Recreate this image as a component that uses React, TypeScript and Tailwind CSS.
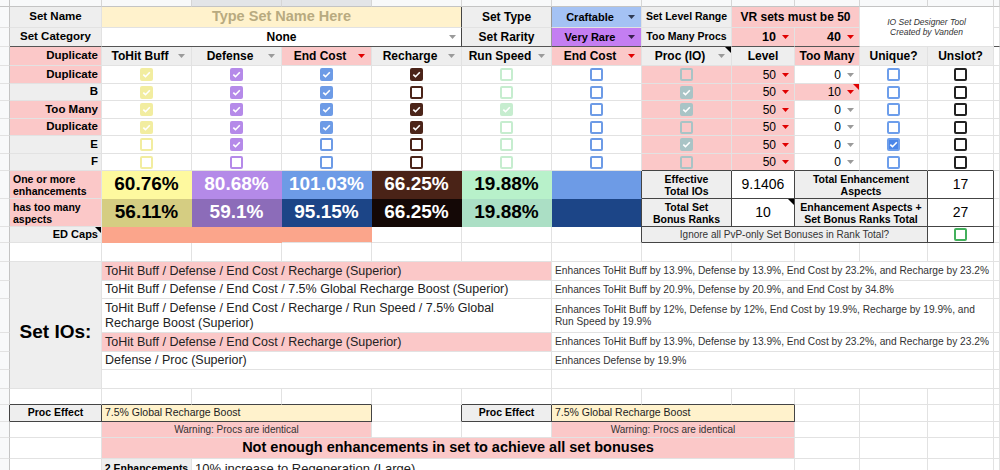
import React from 'react';

type CellProps = { className?: string; bd?: string; children?: React.ReactNode };

const Cell = ({ className = '', bd = 'border-[#e2e2e2]', children }: CellProps) => (
  <div className={`relative flex min-w-0 items-center overflow-hidden border-r border-b ${bd} ${className}`}>{children}</div>
);

const Rh = ({ bd = 'border-[#e2e2e2] border-r-[#c4c4c4]' }: { bd?: string }) => <Cell bd={bd} className="bg-[#f8f9fa]" />;

const Arrow = ({ c = '#8a8a8a', className = '' }: { c?: string; className?: string }) => (
  <svg width="7" height="4" viewBox="0 0 7 4" className={`shrink-0 ${className}`}>
    <path d="M0 0h7L3.5 4z" fill={c} />
  </svg>
);

const Corner = ({ c = '#000' }: { c?: string }) => (
  <svg width="6" height="6" viewBox="0 0 6 6" className="absolute right-0 top-0">
    <path d="M0 0h6v6z" fill={c} />
  </svg>
);

type Tone = { line: string; fill: string };
const T: Record<string, Tone> = {
  yellow: { line: 'border-[#f2eda0]', fill: 'bg-[#f2eda0]' },
  purple: { line: 'border-[#b58ae9]', fill: 'bg-[#b58ae9]' },
  blue: { line: 'border-[#6d9be6]', fill: 'bg-[#6d9be6]' },
  brown: { line: 'border-[#4b2419]', fill: 'bg-[#4b2419]' },
  green: { line: 'border-[#c6edcf]', fill: 'bg-[#c6edcf]' },
  proc: { line: 'border-[#a9c4c6]', fill: 'bg-[#a9c4c6]' },
  unique: { line: 'border-[#6d9eeb]', fill: 'bg-[#4a86e8]' },
  black: { line: 'border-[#222222]', fill: 'bg-[#222222]' },
  pvp: { line: 'border-[#43b05c]', fill: 'bg-[#43b05c]' },
};

const Check = ({ on, t }: { on: boolean; t: Tone }) => (
  <div className={`flex h-[13px] w-[13px] items-center justify-center rounded-[2px] border-2 ${t.line} ${on ? t.fill : ''}`}>
    {on && (
      <svg width="9" height="9" viewBox="0 0 9 9">
        <path d="M1.3 4.6 3.5 6.7 7.8 2.2" fill="none" stroke="#fff" strokeWidth="1.6" />
      </svg>
    )}
  </div>
);

const PINK = 'bg-[#fbc8c8]';
const GREY = 'bg-[#eeeeee]';

const rows = [
  { label: 'Duplicate', pink: true, hit: 1, def: 1, end: 1, rech: 1, run: 0, proc: 0, many: 0, uniq: 0 },
  { label: 'B', pink: false, hit: 1, def: 1, end: 1, rech: 0, run: 0, proc: 1, many: 10, uniq: 0 },
  { label: 'Too Many', pink: true, hit: 1, def: 1, end: 1, rech: 1, run: 1, proc: 1, many: 0, uniq: 0 },
  { label: 'Duplicate', pink: true, hit: 1, def: 1, end: 1, rech: 1, run: 0, proc: 0, many: 0, uniq: 0 },
  { label: 'E', pink: false, hit: 0, def: 1, end: 0, rech: 0, run: 0, proc: 1, many: 0, uniq: 1 },
  { label: 'F', pink: false, hit: 0, def: 0, end: 0, rech: 0, run: 0, proc: 0, many: 0, uniq: 0 },
];

const setIOs = [
  {
    pink: true,
    name: 'ToHit Buff / Defense / End Cost / Recharge (Superior)',
    desc: 'Enhances ToHit Buff by 13.9%, Defense by 13.9%, End Cost by 23.2%, and Recharge by 23.2%',
  },
  {
    pink: false,
    name: 'ToHit Buff / Defense / End Cost / 7.5% Global Recharge Boost (Superior)',
    desc: 'Enhances ToHit Buff by 20.9%, Defense by 20.9%, and End Cost by 34.8%',
  },
  {
    pink: false,
    name: (
      <>
        ToHit Buff / Defense / End Cost / Recharge / Run Speed / 7.5% Global
        <br />
        Recharge Boost (Superior)
      </>
    ),
    desc: (
      <>
        Enhances ToHit Buff by 12%, Defense by 12%, End Cost by 19.9%, Recharge by 19.9%, and
        <br />
        Run Speed by 19.9%
      </>
    ),
  },
  {
    pink: true,
    name: 'ToHit Buff / Defense / End Cost / Recharge (Superior)',
    desc: 'Enhances ToHit Buff by 13.9%, Defense by 13.9%, End Cost by 23.2%, and Recharge by 23.2%',
  },
  { pink: false, name: 'Defense / Proc (Superior)', desc: 'Enhances Defense by 19.9%' },
];

const Header = ({ text, tone, arrow }: { text: string; tone: string; arrow?: string }) => (
  <Cell className={`${tone} text-[12px] font-bold`}>
    <div className="flex-1 text-center">{text}</div>
    {arrow && <Arrow c={arrow} className="mr-[6px]" />}
  </Cell>
);

const Pct = ({ v, bg, light }: { v: string; bg: string; light?: boolean }) => (
  <Cell bd="border-transparent" className={`justify-center text-[19px] font-bold ${bg} ${light ? 'text-white' : 'text-black'}`}>
    {v}
  </Cell>
);

export default function App() {
  const dk = 'border-[#444444]';
  return (
    <div className="h-[470px] w-[1000px] overflow-hidden bg-white font-['Liberation_Sans',Arial,sans-serif] text-black">
      <div className="grid grid-cols-[10px_92px_90px_90px_90px_90px_90px_90px_90px_63px_65px_68px_66px_6px] grid-rows-[7px_21px_19px_19px_18px_17px_18px_17px_18px_17px_28px_28px_16px_19px_19px_18px_34px_19px_18px_19px_16px_17px_16px_21px_24px]">
        {/* sheet column header strip */}
        <Cell bd="border-[#c4c4c4]" className="bg-[#f8f9fa]" />
        <Cell bd="border-[#d6d6d6] border-b-[#c4c4c4]" className="bg-[#f8f9fa]" />
        <Cell bd="border-[#d6d6d6] border-b-[#c4c4c4]" className="bg-[#f8f9fa]" />
        <Cell bd="border-[#d6d6d6] border-b-[#c4c4c4]" className="bg-[#e3e5e8]" />
        <Cell bd="border-[#d6d6d6] border-b-[#c4c4c4]" className="bg-[#e3e5e8]" />
        <Cell bd="border-[#d6d6d6] border-b-[#c4c4c4]" className="bg-[#f8f9fa]" />
        <Cell bd="border-[#d6d6d6] border-b-[#c4c4c4]" className="bg-[#f8f9fa]" />
        <Cell bd="border-[#d6d6d6] border-b-[#c4c4c4]" className="bg-[#f8f9fa]" />
        <Cell bd="border-[#d6d6d6] border-b-[#c4c4c4]" className="bg-[#f8f9fa]" />
        <Cell bd="border-[#d6d6d6] border-b-[#c4c4c4]" className="bg-[#f8f9fa]" />
        <Cell bd="border-[#d6d6d6] border-b-[#c4c4c4]" className="bg-[#f8f9fa]" />
        <Cell bd="border-[#d6d6d6] border-b-[#c4c4c4]" className="bg-[#f8f9fa]" />
        <Cell bd="border-[#d6d6d6] border-b-[#c4c4c4]" className="bg-[#f8f9fa]" />
        <Cell bd="border-[#d6d6d6] border-b-[#c4c4c4]" className="bg-[#f8f9fa]" />

        {/* row 1 */}
        <Rh />
        <Cell className={`${GREY} justify-center text-[11.5px] font-bold`}>Set Name</Cell>
        <Cell bd="border-[#e2e2e2] border-r-[#444444]" className="col-span-4 justify-center bg-[#fff2cc] text-[14.5px] font-bold text-[#b8aa80]">
          Type Set Name Here
        </Cell>
        <Cell bd="border-[#e2e2e2] border-r-[#999999]" className={`${GREY} justify-center text-[12px] font-bold`}>Set Type</Cell>
        <Cell className="bg-[#a4c2f4] text-[11px] font-bold">
          <div className="flex-1 text-center">Craftable</div>
          <Arrow c="#2f3b55" className="mr-[6px]" />
        </Cell>
        <Cell className={`${GREY} justify-center text-[10.5px] font-bold`}>Set Level Range</Cell>
        <Cell className={`${PINK} col-span-2 justify-center text-[12px] font-bold`}>VR sets must be 50</Cell>
        <Cell className="col-span-2 row-span-2 flex-col justify-center text-[8.5px] italic leading-[10px] text-[#333]">
          <div>IO Set Designer Tool</div>
          <div>Created by Vanden</div>
        </Cell>
        <Cell />

        {/* row 2 */}
        <Rh />
        <Cell bd="border-[#e2e2e2] border-b-[#555555]" className={`${GREY} justify-center text-[11.5px] font-bold`}>Set Category</Cell>
        <Cell bd="border-[#444444] border-b-[#555555]" className="col-span-4 text-[12px] font-bold">
          <div className="flex-1 pl-[12px] text-center">None</div>
          <Arrow c="#9a9a9a" className="mr-[5px]" />
        </Cell>
        <Cell bd="border-[#999999] border-b-[#555555]" className={`${GREY} justify-center text-[12px] font-bold`}>Set Rarity</Cell>
        <Cell bd="border-[#e2e2e2] border-b-[#555555]" className="bg-[#c47ef2] text-[11px] font-bold">
          <div className="flex-1 text-center">Very Rare</div>
          <Arrow c="#3a2050" className="mr-[6px]" />
        </Cell>
        <Cell bd="border-[#e2e2e2] border-b-[#555555]" className={`${GREY} justify-center text-[10.5px] font-bold`}>Too Many Procs</Cell>
        <Cell bd="border-[#e2e2e2] border-b-[#555555]" className={`${PINK} justify-end text-[12.5px] font-bold`}>
          10
          <Arrow c="#e00000" className="ml-[6px] mr-[5px]" />
        </Cell>
        <Cell bd="border-[#e2e2e2] border-b-[#555555]" className={`${PINK} justify-end text-[12.5px] font-bold`}>
          40
          <Arrow c="#e00000" className="ml-[6px] mr-[5px]" />
        </Cell>
        <Cell bd="border-[#e2e2e2] border-b-[#555555]" />

        {/* row 3 headers */}
        <Rh />
        <Cell className={`${PINK} justify-end pr-[3px] text-[11.5px] font-bold`}>Duplicate</Cell>
        <Header text="ToHit Buff" tone={GREY} arrow="#9a9a9a" />
        <Header text="Defense" tone={GREY} arrow="#9a9a9a" />
        <Header text="End Cost" tone={PINK} arrow="#e00000" />
        <Header text="Recharge" tone={GREY} arrow="#9a9a9a" />
        <Header text="Run Speed" tone={GREY} arrow="#9a9a9a" />
        <Header text="End Cost" tone={PINK} arrow="#e00000" />
        <Cell className={`${GREY} text-[12px] font-bold`}>
          <div className="flex-1 text-center">Proc (IO)</div>
          <Arrow c="#9a9a9a" className="mr-[6px]" />
          <Corner />
        </Cell>
        <Header text="Level" tone={GREY} />
        <Header text="Too Many" tone={PINK} />
        <Header text="Unique?" tone={GREY} />
        <Header text="Unslot?" tone={GREY} />
        <Cell />

        {/* checkbox rows */}
        {rows.map((r, i) => {
          const last = i === rows.length - 1;
          const bot = last ? 'border-[#e2e2e2] border-b-[#444444]' : 'border-[#e2e2e2]';
          return (
            <React.Fragment key={i}>
              <Rh />
              <Cell className={`${r.pink ? PINK : GREY} justify-end pr-[3px] text-[11.5px] font-bold`}>{r.label}</Cell>
              <Cell className="justify-center"><Check on={!!r.hit} t={T.yellow} /></Cell>
              <Cell className="justify-center"><Check on={!!r.def} t={T.purple} /></Cell>
              <Cell className="justify-center"><Check on={!!r.end} t={T.blue} /></Cell>
              <Cell className="justify-center"><Check on={!!r.rech} t={T.brown} /></Cell>
              <Cell className="justify-center"><Check on={!!r.run} t={T.green} /></Cell>
              <Cell className="justify-center"><Check on={false} t={T.blue} /></Cell>
              <Cell bd={bot} className={`${PINK} justify-center`}><Check on={!!r.proc} t={T.proc} /></Cell>
              <Cell bd={bot} className={`${PINK} justify-end text-[12px]`}>
                50
                <Arrow c="#e00000" className="ml-[6px] mr-[5px]" />
              </Cell>
              <Cell bd={bot} className={`${r.many ? PINK : ''} justify-end text-[12px]`}>
                {r.many}
                <Arrow c={r.many ? '#e00000' : '#9a9a9a'} className="ml-[6px] mr-[5px]" />
                {r.many ? <Corner c="#e00000" /> : null}
              </Cell>
              <Cell bd={bot} className="justify-center"><Check on={!!r.uniq} t={T.unique} /></Cell>
              <Cell bd={bot} className="justify-center"><Check on={false} t={T.black} /></Cell>
              <Cell />
            </React.Fragment>
          );
        })}

        {/* totals row 1 */}
        <Rh />
        <Cell className={`${PINK} pl-[3px] text-[10.5px] font-bold leading-[12px]`}>One or more<br />enhancements</Cell>
        <Pct v="60.76%" bg="bg-[#fef99f]" />
        <Pct v="80.68%" bg="bg-[#b48ae8]" light />
        <Pct v="101.03%" bg="bg-[#6d9be6]" light />
        <Pct v="66.25%" bg="bg-[#4a2317]" light />
        <Pct v="19.88%" bg="bg-[#b8f1ca]" />
        <Cell bd="border-transparent border-r-[#444444]" className="bg-[#6d9be6]" />
        <Cell bd={dk} className={`${GREY} justify-center text-center text-[10.5px] font-bold leading-[12px]`}>Effective<br />Total IOs</Cell>
        <Cell bd={dk} className="justify-center text-[14px]">9.1406</Cell>
        <Cell bd={dk} className={`${GREY} col-span-2 justify-center text-center text-[10.5px] font-bold leading-[12px]`}>Total Enhancement<br />Aspects</Cell>
        <Cell bd={dk} className="justify-center text-[14px]">17</Cell>
        <Cell />

        {/* totals row 2 */}
        <Rh />
        <Cell className={`${PINK} pl-[3px] text-[10.5px] font-bold leading-[12px]`}>has too many<br />aspects</Cell>
        <Pct v="56.11%" bg="bg-[#d5cd82]" />
        <Pct v="59.1%" bg="bg-[#8c6cb9]" light />
        <Pct v="95.15%" bg="bg-[#1c4587]" light />
        <Pct v="66.25%" bg="bg-[#140806]" light />
        <Pct v="19.88%" bg="bg-[#abdfc5]" />
        <Cell bd="border-transparent border-r-[#444444]" className="bg-[#1c4587]" />
        <Cell bd={dk} className={`${GREY} justify-center text-center text-[10.5px] font-bold leading-[12px]`}>Total Set<br />Bonus Ranks</Cell>
        <Cell bd={dk} className="justify-center text-[14px]">10<Corner /></Cell>
        <Cell bd={dk} className={`${GREY} col-span-2 justify-center text-center text-[10.5px] font-bold leading-[12px]`}>Enhancement Aspects +<br />Set Bonus Ranks Total</Cell>
        <Cell bd={dk} className="justify-center text-[14px]">27</Cell>
        <Cell />

        {/* ED caps row */}
        <Rh />
        <Cell className={`${GREY} justify-end pr-[3px] text-[11px] font-bold`}>ED Caps<Corner /></Cell>
        <Cell bd="border-[#fba58b]" className="bg-[#fba58b]" />
        <Cell bd="border-[#fba58b]" className="bg-[#fba58b]" />
        <Cell bd="border-[#fba58b] border-b-[#e2e2e2]" className="bg-[#fba58b]" />
        <Cell />
        <Cell />
        <Cell bd="border-[#e2e2e2] border-r-[#444444]" />
        <Cell bd={dk} className={`${GREY} col-span-4 justify-center text-[10px] text-[#333]`}>Ignore all PvP-only Set Bonuses in Rank Total?</Cell>
        <Cell bd={dk} className="justify-center"><Check on={false} t={T.pvp} /></Cell>
        <Cell />

        {/* blank row */}
        <Rh />
        {Array.from({ length: 13 }).map((_, i) => <Cell key={i} />)}

        {/* set IOs */}
        {setIOs.map((s, i) => (
          <React.Fragment key={i}>
            <Rh />
            {i === 0 && (
              <Cell className={`${GREY} row-span-6 justify-center pt-[14px] text-[19px] font-bold`}>Set IOs:</Cell>
            )}
            <Cell className={`${s.pink ? PINK : ''} col-span-5 pl-[3px] text-[12.5px] leading-[15px] text-[#222]`}>{s.name}</Cell>
            <Cell className="col-span-6 pl-[3px] text-[10.2px] leading-[12px] text-[#333]">{s.desc}</Cell>
            <Cell />
          </React.Fragment>
        ))}
        <Rh />
        <Cell className="col-span-5" />
        <Cell className="col-span-6" />
        <Cell />

        {/* blank row above procs */}
        <Rh />
        <Cell bd="border-[#e2e2e2] border-b-[#444444]" />
        <Cell bd="border-[#e2e2e2] border-b-[#444444]" />
        <Cell bd="border-[#e2e2e2] border-b-[#444444]" />
        <Cell bd="border-[#e2e2e2] border-b-[#444444]" />
        <Cell />
        <Cell bd="border-[#e2e2e2] border-b-[#444444]" />
        <Cell bd="border-[#e2e2e2] border-b-[#444444]" />
        <Cell bd="border-[#e2e2e2] border-b-[#444444]" />
        <Cell bd="border-[#e2e2e2] border-b-[#444444]" />
        <Cell />
        <Cell />
        <Cell />
        <Cell />

        {/* proc effect row */}
        <Rh bd="border-[#e2e2e2] border-r-[#444444]" />
        <Cell bd={dk} className={`${GREY} justify-center text-[10.5px] font-bold`}>Proc Effect</Cell>
        <Cell bd={dk} className="col-span-3 bg-[#fff2cc] pl-[3px] text-[10.5px] text-[#222]">7.5% Global Recharge Boost</Cell>
        <Cell bd="border-[#e2e2e2] border-r-[#444444]" />
        <Cell bd={dk} className={`${GREY} justify-center text-[10.5px] font-bold`}>Proc Effect</Cell>
        <Cell bd={dk} className="col-span-3 bg-[#fff2cc] pl-[3px] text-[10.5px] text-[#222]">7.5% Global Recharge Boost</Cell>
        <Cell />
        <Cell />
        <Cell />
        <Cell />

        {/* warning row */}
        <Rh />
        <Cell />
        <Cell className={`${PINK} col-span-3 justify-center text-[10px] text-[#333]`}>Warning: Procs are identical</Cell>
        <Cell />
        <Cell />
        <Cell className={`${PINK} col-span-3 justify-center text-[10px] text-[#333]`}>Warning: Procs are identical</Cell>
        <Cell />
        <Cell />
        <Cell />
        <Cell />

        {/* not enough row */}
        <Rh />
        <Cell />
        <Cell className={`${PINK} col-span-8 justify-center text-[14.5px] font-bold`}>Not enough enhancements in set to achieve all set bonuses</Cell>
        <Cell />
        <Cell />
        <Cell />
        <Cell />

        {/* bonus row */}
        <Rh />
        <Cell />
        <Cell className={`${GREY} items-start justify-center pt-[2px] text-[10.5px] font-bold`}>2 Enhancements</Cell>
        <Cell className="col-span-7 items-start pl-[3px] text-[13px] text-[#222]">10% increase to Regeneration (Large)</Cell>
        <Cell />
        <Cell />
        <Cell />
        <Cell />
      </div>
    </div>
  );
}
